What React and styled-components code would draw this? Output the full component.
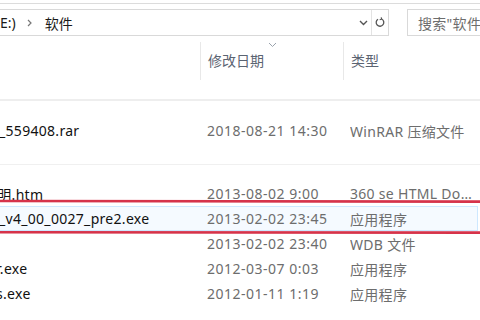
import React from "react"
import styled, { createGlobalStyle } from "styled-components"

const GlobalStyle = createGlobalStyle`
  html, body {
    margin: 0;
    padding: 0;
    background: #fff;
  }
  body {
    width: 480px;
    height: 320px;
    overflow: hidden;
    font-family: "Noto Sans", "Noto Sans CJK SC", sans-serif;
  }
`

const Window = styled.div`
  position: relative;
  width: 480px;
  height: 320px;
  overflow: hidden;
  background: #fff;
`

const Ribbon = styled.div`
  height: 3px;
  border-bottom: 1px solid #dcdcdc;
`

const NavBar = styled.div`
  display: flex;
  align-items: stretch;
  height: 26px;
  margin-top: 5px;
`

const AddressBox = styled.div`
  display: flex;
  align-items: center;
  width: 390px;
  margin-left: -1px;
  border: 1px solid #d9d9d9;
  box-sizing: border-box;
  height: 27px;
`

const Crumb = styled.span`
  font-size: 14px;
  color: #1a1a1a;
  white-space: nowrap;
`

const CrumbSep = styled.span`
  display: flex;
  align-items: center;
  margin: 0 13px 0 11px;
  color: #777;
`

const Spacer = styled.div`
  flex: 1;
`

const AddrButton = styled.div`
  display: flex;
  align-items: center;
  justify-content: center;
  width: ${p => p.w}px;
  height: 100%;
  border-left: ${p => (p.divided ? "1px solid #e3e3e3" : "none")};
  color: #555;
`

const SearchBox = styled.div`
  display: flex;
  align-items: center;
  margin-left: 18px;
  flex: 1;
  height: 27px;
  box-sizing: border-box;
  border: 1px solid #d9d9d9;
  border-right: none;
  padding-left: 10px;
  font-size: 14px;
  letter-spacing: 0.3px;
  color: #6d6d6d;
  white-space: nowrap;
  overflow: hidden;
`

const HeaderRow = styled.div`
  display: grid;
  grid-template-columns: 200px 143px 1fr;
  height: 38px;
  margin-top: 7px;
`

const HeaderCell = styled.div`
  display: flex;
  flex-direction: column;
  justify-content: flex-end;
  padding: 0 0 10px 7px;
  border-left: ${p => (p.first ? "none" : "1px solid #e8e8e8")};
  font-size: 14px;
  color: #5b6472;
`

const SortMark = styled.div`
  display: flex;
  justify-content: center;
  height: 8px;
  margin-left: -7px;
`

const Divider = styled.div`
  height: ${p => p.h}px;
  background: ${p => p.c};
  margin-top: ${p => p.top}px;
`

const Row = styled.div`
  display: grid;
  grid-template-columns: 207px 143px 1fr;
  align-items: center;
  height: 25px;
  box-sizing: border-box;
  margin-top: ${p => p.top || 0}px;
  margin-right: 2px;
  border: 1px solid ${p => (p.selected ? "#cde8ff" : "transparent")};
  border-left: none;
  background: ${p => (p.selected ? "#f5faff" : "transparent")};
  font-size: 14px;
  letter-spacing: 0.3px;
  white-space: nowrap;
`

const Name = styled.span`
  color: #111;
  margin-left: ${p => -p.cut}px;
`

const Date = styled.span`
  color: #6d6d6d;
  letter-spacing: 0.5px;
`

const Type = styled.span`
  color: #6d6d6d;
  overflow: hidden;
  text-overflow: ellipsis;
`

const Annotation = styled.svg`
  position: absolute;
  left: 0;
  top: 0;
  pointer-events: none;
`

const files = [
  { name: "_559408.rar", date: "2018-08-21 14:30", type: "WinRAR 压缩文件", cut: 1, top: 17 },
  { name: "说明.htm", date: "2013-08-02 9:00", type: "360 se HTML Document", cut: 17, top: 16 },
  { name: "_v4_00_0027_pre2.exe", date: "2013-02-02 23:45", type: "应用程序", cut: 1, selected: true },
  { name: "", date: "2013-02-02 23:40", type: "WDB 文件", cut: 0 },
  { name: "r.exe", date: "2012-03-07 0:03", type: "应用程序", cut: 4 },
  { name: "s.exe", date: "2012-01-11 1:19", type: "应用程序", cut: 4 },
]

const FileRow = ({ f }) => (
  <Row top={f.top} selected={f.selected}>
    <Name cut={f.cut}>{f.name}</Name>
    <Date>{f.date}</Date>
    <Type>{f.type}</Type>
  </Row>
)

const App = () => {
  return (
    <Window>
      <GlobalStyle />
      <Ribbon />
      <NavBar>
        <AddressBox>
          <Crumb>E:)</Crumb>
          <CrumbSep>
            <svg width="5" height="8" viewBox="0 0 5 8">
              <path d="M1 1 L4 4 L1 7" fill="none" stroke="#777" strokeWidth="1.2" />
            </svg>
          </CrumbSep>
          <Crumb>软件</Crumb>
          <Spacer />
          <AddrButton w={16}>
            <svg width="9" height="6" viewBox="0 0 9 6">
              <path d="M1 1 L4.5 4.5 L8 1" fill="none" stroke="#555" strokeWidth="1.4" />
            </svg>
          </AddrButton>
          <AddrButton w={16} divided>
            <svg width="10" height="11" viewBox="0 0 10 11">
              <path d="M3 2.2 A3.8 3.8 0 1 0 6.6 2" fill="none" stroke="#555" strokeWidth="1.3" />
              <path d="M6.2 0.3 L6.6 2.2 L4.7 2.8" fill="none" stroke="#555" strokeWidth="1.2" />
            </svg>
          </AddrButton>
        </AddressBox>
        <SearchBox>搜索"软件"</SearchBox>
      </NavBar>

      <HeaderRow>
        <HeaderCell first />
        <HeaderCell>
          <SortMark>
            <svg width="9" height="6" viewBox="0 0 9 6">
              <path d="M1 1 L4.5 4.5 L8 1" fill="none" stroke="#9aa3ad" strokeWidth="1" />
            </svg>
          </SortMark>
          修改日期
        </HeaderCell>
        <HeaderCell>类型</HeaderCell>
      </HeaderRow>

      <Divider h={2} c="#eeeeee" top={19} />
      {files.slice(0, 1).map(f => <FileRow key={f.date} f={f} />)}
      <Divider h={1} c="#f0f0f0" top={21} />
      {files.slice(1).map(f => <FileRow key={f.date} f={f} />)}

      <Annotation width="480" height="320" viewBox="0 0 480 320">
        <path d="M0 201 L480 201.6" stroke="#d6334a" strokeWidth="2.6" fill="none" />
        <path d="M0 232.2 L480 232.6" stroke="#d6334a" strokeWidth="2.6" fill="none" />
      </Annotation>
    </Window>
  )
}

export default App
